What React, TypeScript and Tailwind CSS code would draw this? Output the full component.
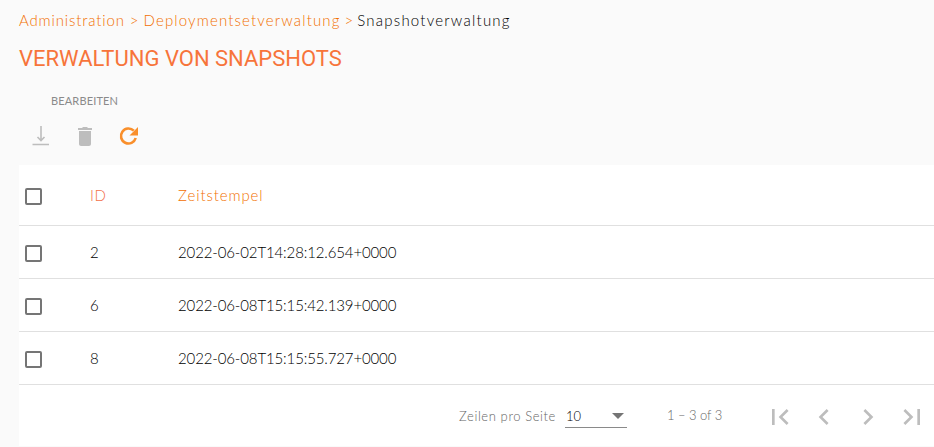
const rows = [
  { id: 2, time: "2022-06-02T14:28:12.654+0000" },
  { id: 6, time: "2022-06-08T15:15:42.139+0000" },
  { id: 8, time: "2022-06-08T15:15:55.727+0000" },
];

const pagerIcons = [
  "M18.41 16.59L13.82 12l4.59-4.59L17 6l-6 6 6 6zM6 6h2v12H6z",
  "M15.41 7.41L14 6l-6 6 6 6 1.41-1.41L10.83 12z",
  "M10 6L8.59 7.41 13.17 12l-4.58 4.59L10 18l6-6z",
  "M5.59 7.41L10.18 12l-4.59 4.59L7 18l6-6-6-6zM16 6h2v12h-2z",
];

function Checkbox() {
  return <div className="h-[17px] w-[17px] rounded-[2px] border-2 border-[#757575]" />;
}

export default function App() {
  return (
    <div className="h-[447px] w-[934px] overflow-hidden bg-[#fafafa] pl-[19px] font-['Lato',sans-serif] text-[15px] font-light text-[#000000]">
      <div className="flex h-[39px] items-center pt-px">
        <span className="tracking-[0.85px] text-[#f27000]">Administration</span>
        <span className="ml-[5px] text-[#f27000]">&gt;</span>
        <span className="ml-[5px] tracking-[1.15px] text-[#f27000]">Deploymentsetverwaltung</span>
        <span className="ml-[4px] text-[#f27000]">&gt;</span>
        <span className="ml-[4px] tracking-[1.23px]">Snapshotverwaltung</span>
      </div>
      <h1 className="flex h-[38px] items-center font-['Roboto',sans-serif] text-[22px] font-normal text-[#f7743a]">
        VERWALTUNG VON SNAPSHOTS
      </h1>
      <div className="flex h-[32px] items-end pl-[32px] text-[11px] font-normal tracking-[0.15px] text-[#8a8a8a]">
        <span>BEARBEITEN</span>
      </div>
      <div className="flex h-[56px] items-center gap-[20px] pb-[2px] pl-[10px]">
        <svg viewBox="0 0 24 24" className="h-6 w-6 fill-none stroke-[#bdbdbd] stroke-[1.6]">
          <path d="M12 2v14.500M8.500 13l3.500 3.500 3.500-3.500M3.500 20.500H20" />
        </svg>
        <svg viewBox="0 0 24 24" className="h-6 w-6 fill-[#bdbdbd]">
          <path d="M6 20c0 1.100.9 2 2 2h8c1.100 0 2-.9 2-2V7H6v13zM19 4h-4l-1-1h-4l-1 1H5v2h14V4z" />
        </svg>
        <svg viewBox="0 0 24 24" className="h-6 w-6">
          <path d="M16.800 6.700A7.500 7.500 0 1 0 18.700 14" className="fill-none stroke-[#f98f2b] stroke-[2.600]" />
          <path d="M21 3v8.500h-8.500z" className="fill-[#f98f2b]" />
        </svg>
      </div>
      <div className="bg-white">
        <div className="flex h-[61px] items-center border-b border-[#e0e0e0] pt-[3px] pl-[6px]">
          <Checkbox />
          <span className="ml-[48px] w-[88px] pb-[2px] tracking-[0.6px] text-[#f27048]">ID</span>
          <span className="pb-[2px] tracking-[0.9px] text-[#f27000]">Zeitstempel</span>
        </div>
        {rows.map((row) => (
          <div key={row.id} className="flex h-[53px] items-center border-b border-[#e0e0e0] pt-[2px] pl-[6px]">
            <Checkbox />
            <span className="ml-[48px] w-[88px] pb-[2px]">{row.id}</span>
            <span className="pb-[2px] tracking-[-0.13px]">{row.time}</span>
          </div>
        ))}
        <div className="flex h-[61px] items-center pt-[3px] text-[13px] text-[#666666]">
          <span className="ml-[440px] w-[106px] tracking-[0.6px]">Zeilen pro Seite</span>
          <div className="flex h-[22px] w-[62px] items-center justify-between border-b border-[#8a8a8a] pl-[1px] pr-[3px]">
            <span className="text-[#000000]">10</span>
            <span className="mb-[2px] h-0 w-0 border-x-[6px] border-t-[6px] border-x-transparent border-t-[#757575]" />
          </div>
          <span className="ml-[40px] w-[97px] pb-[2px] tracking-[-0.05px]">1 – 3 of 3</span>
          <div className="flex gap-[12px]">
            {pagerIcons.map((d) => (
              <svg key={d} viewBox="0 0 24 24" className="h-8 w-8 fill-[#bdbdbd]">
                <path d={d} />
              </svg>
            ))}
          </div>
        </div>
      </div>
    </div>
  );
}
